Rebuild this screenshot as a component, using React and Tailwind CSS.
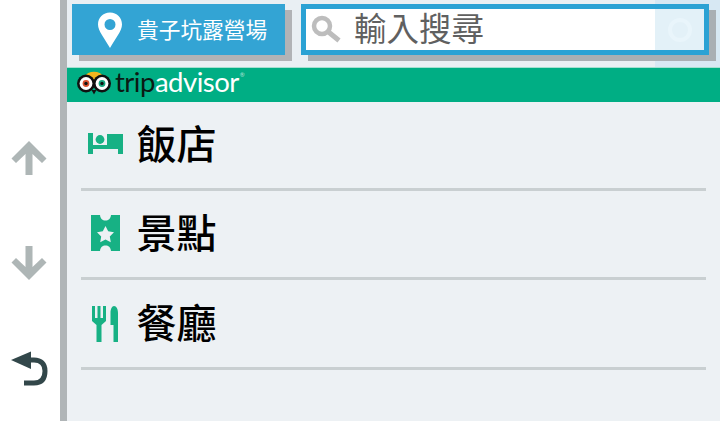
const cjk = { fontFamily: '"Noto Sans CJK TC", sans-serif' };

function Up() {
  return (
    <svg width="36" height="36" viewBox="0 0 36 36" className="block">
      <path d="M18 1 L35.5 18.5 L31 23 L21.5 14 L21.5 35 L14.5 35 L14.5 14 L5 23 L0.5 18.5 Z" fill="#aeb6b6" />
    </svg>
  );
}

function Down() {
  return (
    <svg width="36" height="36" viewBox="0 0 36 36" className="block">
      <path d="M18 35 L35.5 17.5 L31 13 L21.5 22 L21.5 1 L14.5 1 L14.5 22 L5 13 L0.5 17.5 Z" fill="#aeb6b6" />
    </svg>
  );
}

function Back() {
  return (
    <svg width="38" height="36" viewBox="0 0 38 36" className="block">
      <path d="M1 9 L21 0.5 L21 18 Z" fill="#32474a" />
      <path d="M18 9 L24 9 C31 9 35 13 35 20 C35 28 31 32 24 32 L14 32" fill="none" stroke="#32474a" strokeWidth="5" />
    </svg>
  );
}

function Pin() {
  return (
    <svg width="26" height="36" viewBox="0 0 26 36" className="block">
      <path fillRule="evenodd" d="M13 0.5 C20 0.5 25 5.5 25 12.5 C25 19 18 27 13 36 C8 27 1 19 1 12.5 C1 5.5 6 0.5 13 0.5 Z M13 7 A5.5 5.5 0 1 0 13 18 A5.5 5.5 0 1 0 13 7 Z" fill="#fff" />
    </svg>
  );
}

function Search() {
  return (
    <svg width="32" height="30" viewBox="0 0 32 30" className="block">
      <circle cx="11" cy="11" r="8" fill="none" stroke="#bdbdbd" strokeWidth="4.5" />
      <path d="M17.5 17 L28 25.5" stroke="#bdbdbd" strokeWidth="5" />
    </svg>
  );
}

function Owl() {
  return (
    <svg width="34" height="24" viewBox="0 0 34 24" className="block">
      <path d="M7 6 C11 -1 23 -1 27 6 L17 12 Z" fill="#f2b51d" />
      <circle cx="9" cy="12.5" r="9" fill="#111" />
      <circle cx="25" cy="12.5" r="9" fill="#111" />
      <circle cx="9" cy="12.5" r="6.4" fill="#fff" />
      <circle cx="25" cy="12.5" r="6.4" fill="#fff" />
      <circle cx="9" cy="12.5" r="3.4" fill="#d9512f" />
      <circle cx="25" cy="12.5" r="3.4" fill="#17a67f" />
      <circle cx="9" cy="12.5" r="1.7" fill="#111" />
      <circle cx="25" cy="12.5" r="1.7" fill="#111" />
      <path d="M14.5 19 L17 23.5 L19.5 19 Z" fill="#111" />
    </svg>
  );
}

function Bed() {
  return (
    <svg width="36" height="22" viewBox="0 0 36 22" className="block">
      <path d="M0 0 H5 V12 H19 V1 H35 V21 H30 V16 H5 V21 H0 Z" fill="#17b184" />
      <circle cx="12" cy="6.5" r="4.4" fill="#17b184" />
    </svg>
  );
}

function Ticket() {
  return (
    <svg width="29" height="36" viewBox="0 0 29 36" className="block">
      <path fillRule="evenodd" d="M0 0 H9 C9.5 4 11.5 5.5 14.5 5.5 C17.5 5.5 19.5 4 20 0 H29 V36 H20 C19.5 32 17.5 30.5 14.5 30.5 C11.5 30.5 9.5 32 9 36 H0 Z M14.5 11 L17.2 16.2 L23 17.2 L18.8 21.4 L19.8 27.2 L14.5 24.4 L9.2 27.2 L10.2 21.4 L6 17.2 L11.8 16.2 Z" fill="#17b184" />
    </svg>
  );
}

function Cutlery() {
  return (
    <svg width="26" height="36" viewBox="0 0 26 36" className="block">
      <path d="M0 0 H3 V12 H5.5 V0 H8.5 V12 H11 V0 H14 V15 L9.5 19 V36 H4.5 V19 L0 15 Z" fill="#17b184" />
      <path d="M22 0 C24.5 0 26 3 26 7 V36 H21.5 V19 H18.5 V7 C18.5 3 20 0 22 0 Z" fill="#17b184" />
    </svg>
  );
}

function Row({ icon, label, iconClass }) {
  return (
    <div className="h-[89.5px] mx-[14px] flex items-center border-b-[3.5px] border-[#c9cfd1]">
      <div className={`w-[56px] flex ${iconClass}`}>{icon}</div>
      <span className="-mt-[5px] text-[40px] leading-none font-medium text-black -ml-[0.5px]" style={cjk}>{label}</span>
    </div>
  );
}

export default function App() {
  return (
    <div className="w-[720px] h-[421px] overflow-hidden flex bg-white">
      <div className="w-[60px] shrink-0 flex flex-col items-center bg-white">
        <div className="mt-[140px] -ml-[2px]"><Up /></div>
        <div className="mt-[69px] -ml-[2px]"><Down /></div>
        <div className="mt-[70px] -ml-[2px]"><Back /></div>
      </div>
      <div className="w-[7px] shrink-0 bg-[#b0b5b7]" />
      <div className="flex-1 flex flex-col bg-[#edf1f4]">
        <div className="relative h-[67px] shrink-0 flex pl-[5px] pt-[4px] gap-[16px] bg-[#e9eff3]">
          <div className="absolute right-0 top-0 w-[65px] h-[67px] bg-[#d7e8f3]" />
          <div className="w-[213px] h-[51px] bg-[#33a4d4] flex items-center shadow-[7px_6px_0_0_#b1b3b6]">
            <div className="ml-[25px] w-[40px]"><Pin /></div>
            <span className="-mt-[2px] text-[21.7px] leading-none text-white" style={cjk}>貴子坑露營場</span>
          </div>
          <div className="relative w-[408px] h-[51px] bg-white border-[5px] border-[#2ba2d4] flex items-center shadow-[7px_6px_0_0_#a9afb3]">
            <div className="ml-[5px] w-[43px]"><Search /></div>
            <span className="-mt-[4px] text-[32.5px] leading-none text-[#606060]" style={cjk}>輸入搜尋</span>
            <div className="absolute right-0 top-0 w-[49px] h-[41px] bg-[#e3f1f8] flex items-center justify-center">
              <div className="w-[24px] h-[24px] rounded-full border-[4px] border-[#e9f5fb]" />
            </div>
          </div>
        </div>
        <div className="h-[35px] shrink-0 bg-[#00ae84] flex items-center border-t border-[#e9f5f1]/70 pl-[10px]">
          <div className="-mt-[5px]"><Owl /></div>
          <div className="ml-[4px] -mt-[7px] text-[27.5px] leading-none tracking-[-0.5px] flex items-start" style={{ fontFamily: 'Lato, sans-serif' }}>
            <span className="text-[#0b1a14]">trip</span>
            <span className="text-white">advisor</span>
            <span className="text-[6px] text-white/70 mt-[4px] ml-[1px]">®</span>
          </div>
        </div>
        <div className="-mt-[1px]">
          <Row icon={<Bed />} label="飯店" iconClass="pl-[7px] -mt-[1px]" />
          <Row icon={<Ticket />} label="景點" iconClass="pl-[10px] -mt-[1px]" />
          <Row icon={<Cutlery />} label="餐廳" iconClass="pl-[11px] mt-[1px]" />
        </div>
      </div>
    </div>
  );
}
